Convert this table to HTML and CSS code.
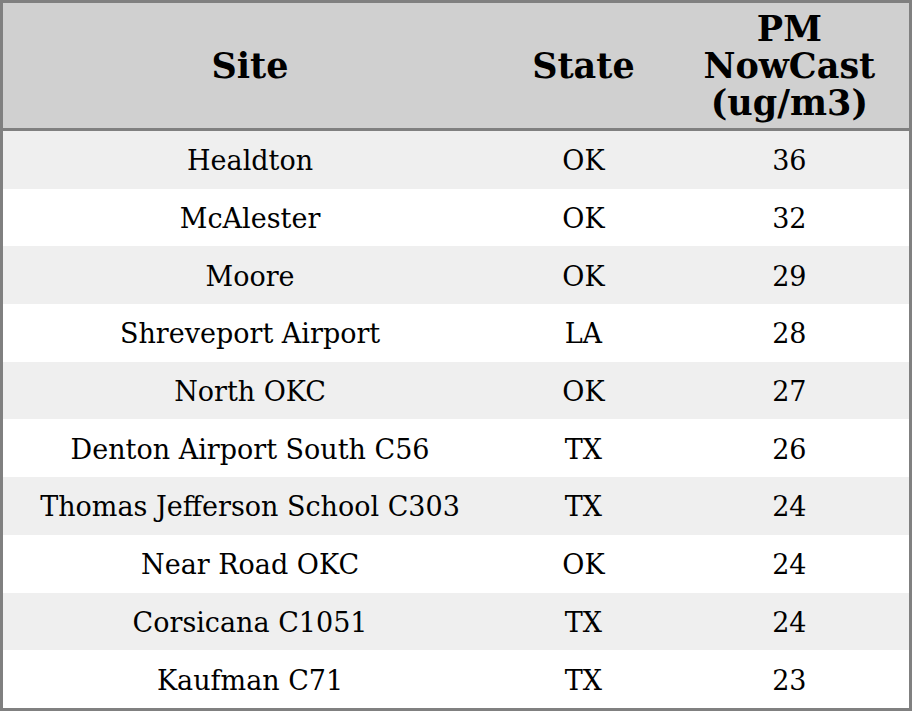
FILE: index.html
```html
<!DOCTYPE html>
<html>
<head>
<meta charset="utf-8">
<link rel="stylesheet" href="styles.css">
</head>
<body>
<table class="grid">
  <colgroup>
    <col class="c-site">
    <col class="c-state">
    <col class="c-pm">
  </colgroup>
  <thead>
    <tr><th>Site</th><th>State</th><th>PM<br>NowCast<br>(ug/m3)</th></tr>
  </thead>
  <tbody>
    <tr><td>Healdton</td><td>OK</td><td>36</td></tr>
    <tr><td>McAlester</td><td>OK</td><td>32</td></tr>
    <tr><td>Moore</td><td>OK</td><td>29</td></tr>
    <tr><td>Shreveport Airport</td><td>LA</td><td>28</td></tr>
    <tr><td>North OKC</td><td>OK</td><td>27</td></tr>
    <tr><td>Denton Airport South C56</td><td>TX</td><td>26</td></tr>
    <tr><td>Thomas Jefferson School C303</td><td>TX</td><td>24</td></tr>
    <tr><td>Near Road OKC</td><td>OK</td><td>24</td></tr>
    <tr><td>Corsicana C1051</td><td>TX</td><td>24</td></tr>
    <tr><td>Kaufman C71</td><td>TX</td><td>23</td></tr>
  </tbody>
</table>
</body>
</html>
```
FILE: styles.css
```css
html, body {
  margin: 0;
  padding: 0;
  background: #ffffff;
}
.grid {
  width: 912px;
  height: 711px;
  border-collapse: collapse;
  table-layout: fixed;
  border: 3px solid #808080;
  font-family: "DejaVu Serif", serif;
  color: #000;
}
.c-site { width: 494px; }
.c-state { width: 172px; }
.c-pm { width: 240px; }
.grid th {
  background: #d0d0d0;
  font-weight: bold;
  font-size: 35px;
  line-height: 37px;
  height: 125px;
  padding: 0;
  text-align: center;
  border-bottom: 3px solid #808080;
}
.grid td {
  font-size: 27px;
  text-align: center;
  padding: 2px 0 0 0;
  height: 55.7px;
}
.grid tbody tr:nth-child(odd) td {
  background: #efefef;
}
```
